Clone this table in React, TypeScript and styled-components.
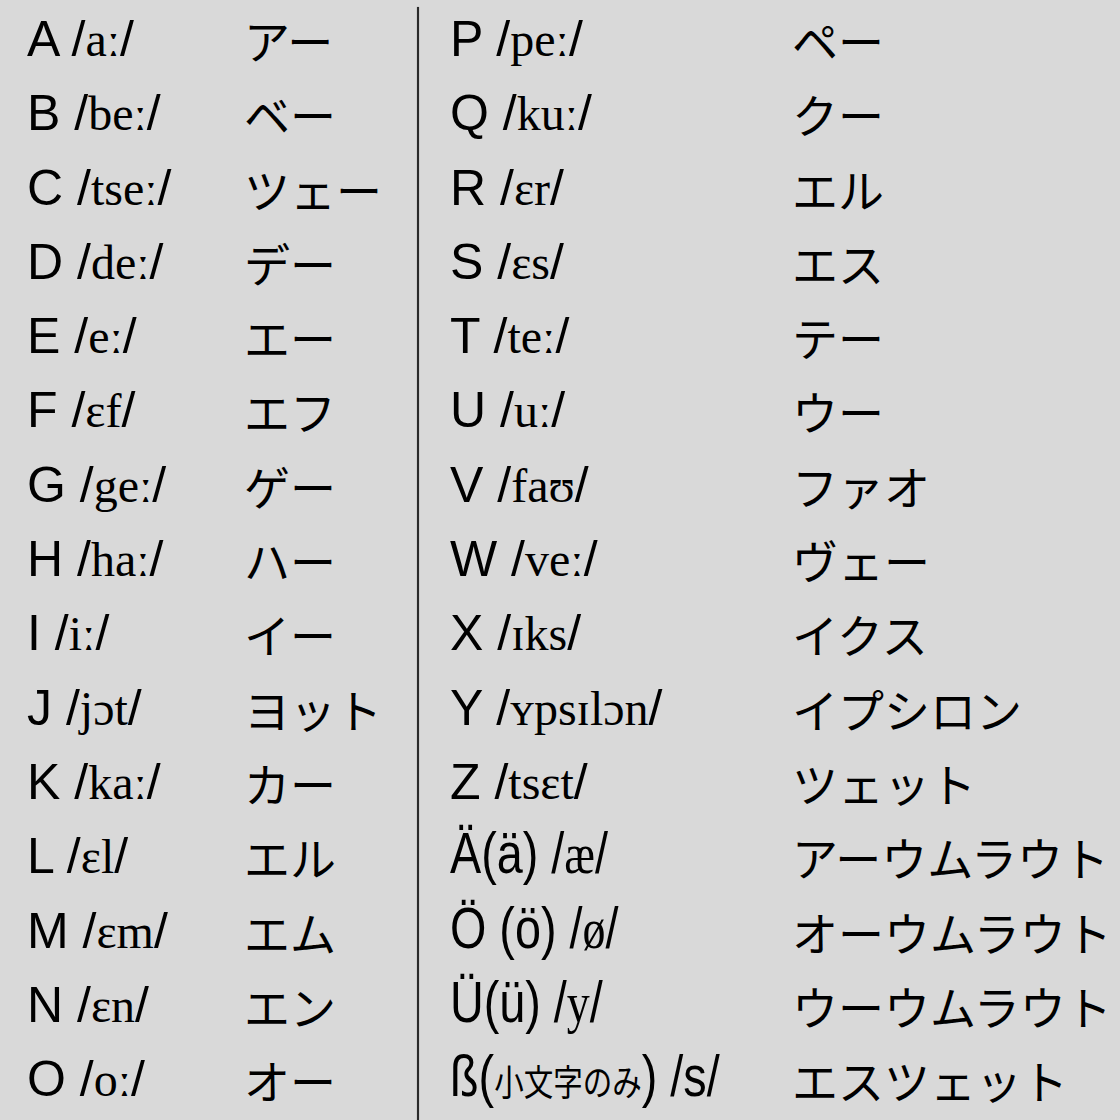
import React from "react";
import styled, { createGlobalStyle } from "styled-components";

const Global = createGlobalStyle`
  html, body { margin: 0; padding: 0; background: #d9d9d9; }
  body { width: 1120px; height: 1120px; overflow: hidden; }
`;

const Page = styled.div`
  width: 1120px;
  height: 1120px;
  background: #d9d9d9;
  display: grid;
  grid-template-columns: 417px 2px 1fr;
  color: #000;
  box-sizing: border-box;
`;

const Column = styled.div<{ $ipaWidth: number; $padLeft: number }>`
  display: grid;
  grid-template-columns: ${(p) => p.$ipaWidth}px 1fr;
  grid-auto-rows: 74.3px;
  padding-top: 2px;
  padding-left: ${(p) => p.$padLeft}px;
`;

const Divider = styled.div`
  margin-top: 7px;
  background: #2a2a2a;
  box-shadow: 0 0 1px #555;
`;

const Cell = styled.div`
  line-height: 74.3px;
  height: 74.3px;
  white-space: nowrap;
  font-family: "Liberation Sans", Arial, sans-serif;
  font-size: 50px;
`;

const Letter = styled.span`
  font-family: "Liberation Sans", Arial, sans-serif;
  font-size: 50px;
  line-height: 1;
`;

const Narrow = styled.span`
  display: inline-block;
  font-family: "Liberation Sans", Arial, sans-serif;
  font-size: 57px;
  line-height: 1;
  transform: scaleX(0.82);
  transform-origin: left center;
`;

const Ipa = styled.span<{ $size?: number }>`
  font-family: "Liberation Serif", "DejaVu Serif", serif;
  font-size: ${(p) => p.$size ?? 48}px;
  line-height: 1;
`;

const Small = styled.span`
  font-family: "Noto Sans CJK JP", sans-serif;
  font-size: 36px;
  line-height: 1;
`;

const Kana = styled.div`
  line-height: 74.3px;
  height: 74.3px;
  white-space: nowrap;
  font-family: "Noto Sans CJK JP", sans-serif;
  font-size: 46px;
  font-weight: 400;
`;

type Row = { l: React.ReactNode; k: string };

const sl = (ipa: string) => (
  <>
    {" /"}
    <Ipa>{ipa}</Ipa>/
  </>
);

const toRows = (list: string[][]): Row[] =>
  list.map(([a, i, k]) => ({
    l: (
      <>
        <Letter>{a}</Letter>
        {sl(i)}
      </>
    ),
    k,
  }));

const left: Row[] = toRows([
  ["A", "aː", "アー"],
  ["B", "beː", "ベー"],
  ["C", "tseː", "ツェー"],
  ["D", "deː", "デー"],
  ["E", "eː", "エー"],
  ["F", "ɛf", "エフ"],
  ["G", "geː", "ゲー"],
  ["H", "haː", "ハー"],
  ["I", "iː", "イー"],
  ["J", "jɔt", "ヨット"],
  ["K", "kaː", "カー"],
  ["L", "ɛl", "エル"],
  ["M", "ɛm", "エム"],
  ["N", "ɛn", "エン"],
  ["O", "oː", "オー"],
]);

const right: Row[] = [
  ...toRows([
    ["P", "peː", "ペー"],
    ["Q", "kuː", "クー"],
    ["R", "ɛr", "エル"],
    ["S", "ɛs", "エス"],
    ["T", "teː", "テー"],
    ["U", "uː", "ウー"],
    ["V", "faʊ", "ファオ"],
    ["W", "veː", "ヴェー"],
    ["X", "ɪks", "イクス"],
    ["Y", "ʏpsɪlɔn", "イプシロン"],
    ["Z", "tsɛt", "ツェット"],
  ]),
  {
    l: (
      <Narrow>
        Ä(ä) /<Ipa $size={56}>æ</Ipa>/
      </Narrow>
    ),
    k: "アーウムラウト",
  },
  {
    l: (
      <Narrow>
        Ö (ö) /<Ipa $size={56}>ø</Ipa>/
      </Narrow>
    ),
    k: "オーウムラウト",
  },
  {
    l: (
      <Narrow>
        Ü(ü) /<Ipa $size={56}>y</Ipa>/
      </Narrow>
    ),
    k: "ウーウムラウト",
  },
  {
    l: (
      <Narrow>
        ß(<Small>小文字のみ</Small>) /s/
      </Narrow>
    ),
    k: "エスツェット",
  },
];

const Table = ({ rows, ipaWidth, padLeft }: { rows: Row[]; ipaWidth: number; padLeft: number }) => (
  <Column $ipaWidth={ipaWidth} $padLeft={padLeft}>
    {rows.map((r, idx) => (
      <React.Fragment key={idx}>
        <Cell>{r.l}</Cell>
        <Kana>{r.k}</Kana>
      </React.Fragment>
    ))}
  </Column>
);

export default function App() {
  return (
    <>
      <Global />
      <Page>
        <Table rows={left} ipaWidth={217} padLeft={27} />
        <Divider />
        <Table rows={right} ipaWidth={342} padLeft={31} />
      </Page>
    </>
  );
}
